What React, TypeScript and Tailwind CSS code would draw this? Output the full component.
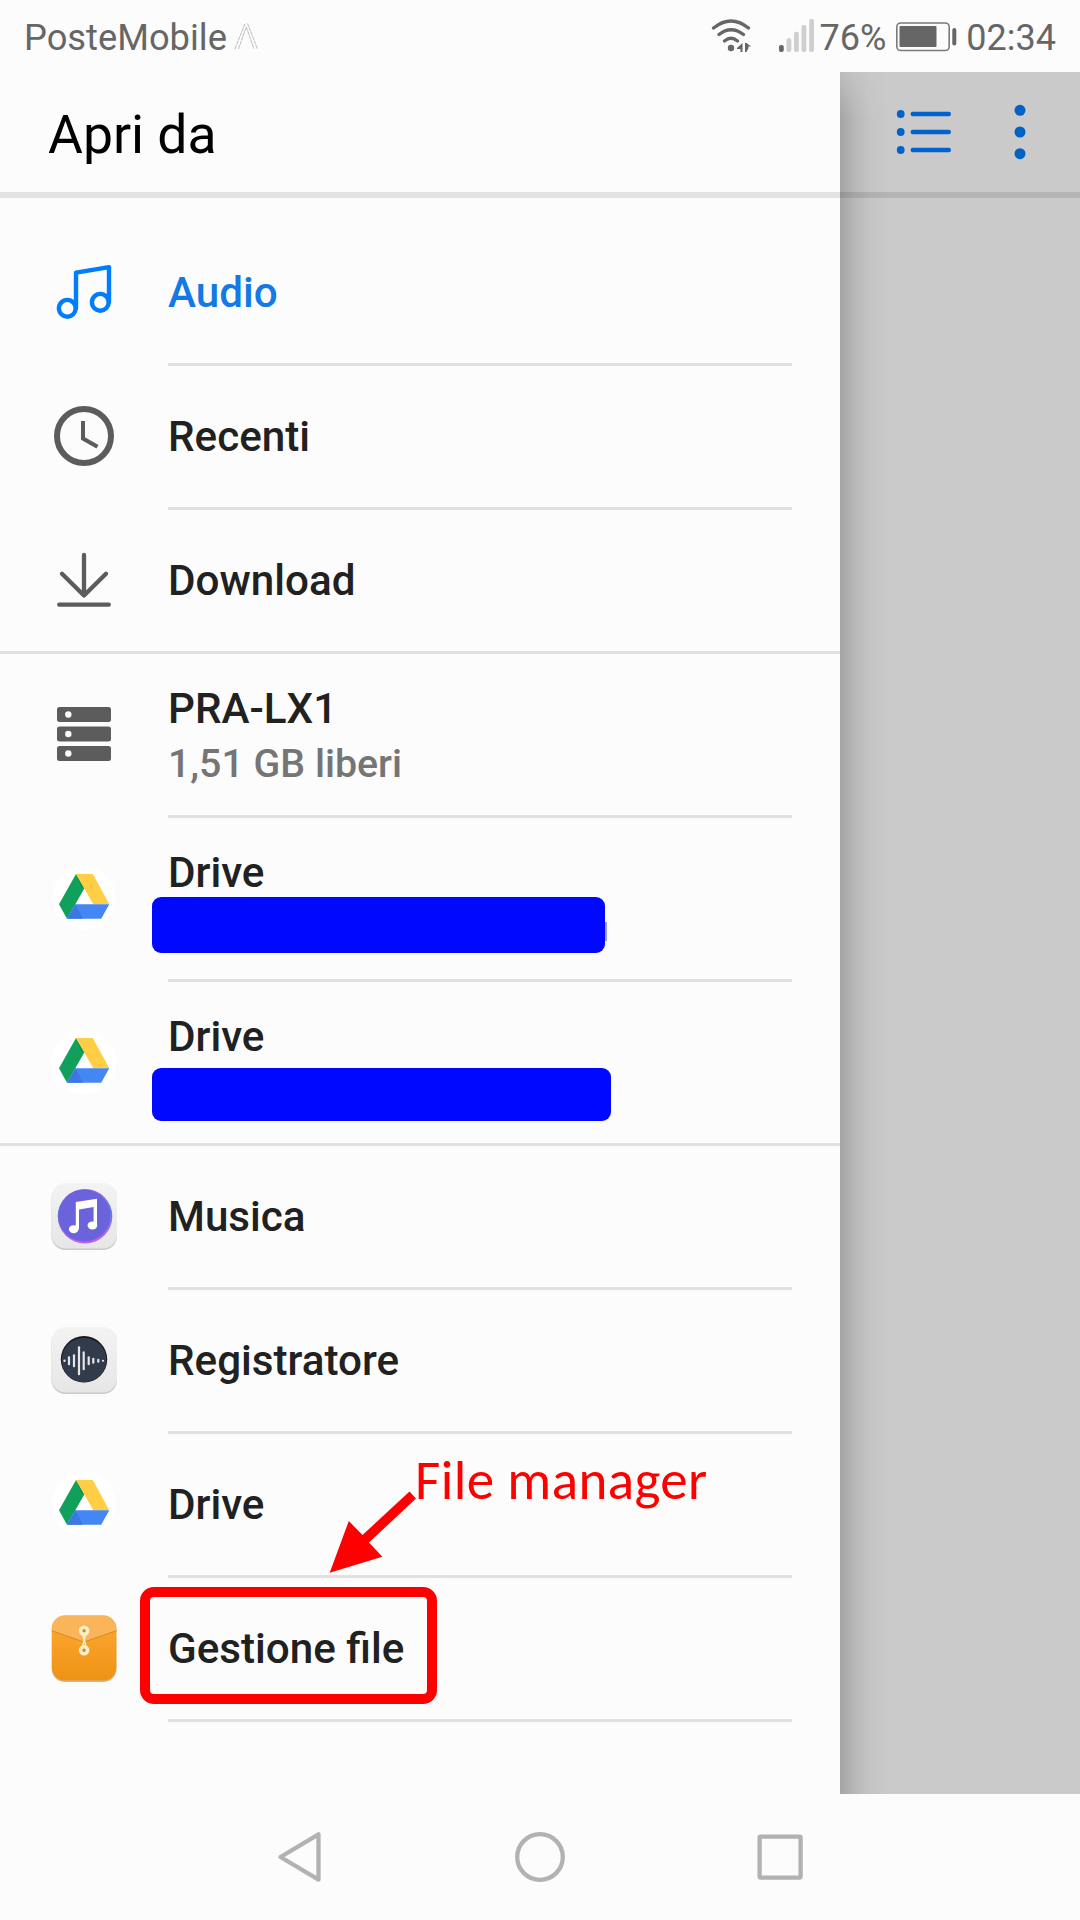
import React from 'react';

function AudioIcon() {
  return (
    <svg viewBox="0 0 72 72" className="w-full h-full" fill="none" stroke="#007dff" strokeWidth="4.4" strokeLinecap="round" strokeLinejoin="round">
      <circle cx="19.3" cy="52.3" r="8.4" />
      <circle cx="52.3" cy="46.3" r="8.4" />
      <path d="M28 52V16.7L61 11.2V46" />
    </svg>
  );
}

function ClockIcon() {
  return (
    <svg viewBox="0 0 72 72" className="w-full h-full" fill="none" stroke="#5c5c5c">
      <circle cx="36" cy="36" r="27" strokeWidth="6" />
      <path d="M35 21V38.5L49.5 46.8" strokeWidth="4" />
    </svg>
  );
}

function DownloadIcon() {
  return (
    <svg viewBox="0 0 72 72" className="w-full h-full" fill="none" stroke="#5c5c5c" strokeWidth="4.3" strokeLinecap="round" strokeLinejoin="round">
      <path d="M36 11V51.5M14 29.7L36 51.5L58 29.7M11.2 60.7H60.8" />
    </svg>
  );
}

function StorageIcon() {
  return (
    <svg viewBox="0 0 72 72" className="w-full h-full">
      <g fill="#5c5c5c">
        <rect x="9" y="9" width="54" height="15" rx="2.5" />
        <rect x="9" y="28.5" width="54" height="15" rx="2.5" />
        <rect x="9" y="48" width="54" height="15" rx="2.5" />
      </g>
      <g fill="#fcfcfc">
        <circle cx="20.3" cy="16.5" r="3.2" />
        <circle cx="20.3" cy="36" r="3.2" />
        <circle cx="20.3" cy="55.5" r="3.2" />
      </g>
    </svg>
  );
}

function DriveIcon() {
  return (
    <svg viewBox="0 0 72 72" className="w-full h-full">
      <circle cx="36" cy="36" r="32" fill="#fff" />
      <path d="M28 12L36.3 26.5L19 56.7L11 42.3Z" fill="#11a05b" />
      <path d="M28 12L36.3 26.5L33.5 25Z" fill="#0d8a4d" />
      <path d="M28 12H44.8L61.3 42.3H45.3Z" fill="#ffce44" />
      <path d="M27.3 42.3H61.3L53.2 56.7H19Z" fill="#4486f4" />
      <path d="M27.3 42.3L35 56.7H19Z" fill="#3d78e2" />
    </svg>
  );
}

function MusicAppIcon() {
  return (
    <svg viewBox="0 0 72 72" className="w-full h-full">
      <defs>
        <linearGradient id="tile" x1="0" y1="0" x2="0" y2="1">
          <stop offset="0" stopColor="#f3f3f3" />
          <stop offset="1" stopColor="#e6e6e6" />
        </linearGradient>
        <linearGradient id="musicRing" x1="0" y1="0" x2="0" y2="1">
          <stop offset="0" stopColor="#b565e0" />
          <stop offset="0.4" stopColor="#5a7fe0" />
          <stop offset="1" stopColor="#c75cf0" />
        </linearGradient>
      </defs>
      <rect x="3.5" y="4" width="65.5" height="66" rx="14" fill="#c9c9c9" />
      <rect x="3.5" y="3" width="65.5" height="65.5" rx="14" fill="url(#tile)" />
      <circle cx="37" cy="36.3" r="27.3" fill="url(#musicRing)" />
      <circle cx="36.3" cy="35.6" r="26" fill="#6a63dc" />
      <g fill="#fff">
        <path d="M27.8 22L49 18.8V45.4H45.6V27L31 29.4V49H27.8Z" />
        <ellipse cx="25.7" cy="49.2" rx="4.8" ry="4" />
        <ellipse cx="44.4" cy="45.4" rx="4.8" ry="4" />
      </g>
    </svg>
  );
}

const waveBars = [
  { x: 16.5, h: 1.2 },
  { x: 21, h: 4.5 },
  { x: 26, h: 6.5 },
  { x: 31, h: 14.5 },
  { x: 35.7, h: 9.5 },
  { x: 40.7, h: 4.5 },
  { x: 45.3, h: 3 },
  { x: 50.3, h: 2 },
  { x: 55, h: 1 },
];

function RecorderIcon() {
  return (
    <svg viewBox="0 0 72 72" className="w-full h-full">
      <rect x="3.5" y="4" width="65.5" height="66" rx="14" fill="#c9c9c9" />
      <rect x="3.5" y="3" width="65.5" height="65.5" rx="14" fill="url(#tile)" />
      <circle cx="36" cy="35.3" r="23.2" fill="#15181f" />
      <circle cx="36" cy="36" r="22.3" fill="#323b4b" />
      {waveBars.map((bar) => (
        <rect key={bar.x} x={bar.x - 1.1} y={36.7 - bar.h} width="2.2" height={bar.h * 2} rx="1" fill="#e4e6ea" />
      ))}
    </svg>
  );
}

function FilesIcon() {
  return (
    <svg viewBox="0 0 72 72" className="w-full h-full">
      <defs>
        <linearGradient id="envelope" x1="0" y1="0" x2="0" y2="1">
          <stop offset="0.3" stopColor="#f9a32a" />
          <stop offset="1" stopColor="#ee9214" />
        </linearGradient>
      </defs>
      <rect x="3.8" y="5" width="64.6" height="65" rx="13" fill="#d5b88c" />
      <rect x="3.8" y="3.6" width="64.6" height="65" rx="13" fill="url(#envelope)" />
      <path d="M3.8 18.5V16.6A13 13 0 0 1 16.8 3.6H55.4A13 13 0 0 1 68.4 16.6V18.5L36 30Z" fill="#fab55a" />
      <path d="M3.8 18.8L36 30L68.4 18.8" fill="none" stroke="#d98a20" strokeWidth="1" />
      <path d="M34.5 22L38 34M38 22L34.5 34" stroke="#fdf0c8" strokeWidth="1.4" />
      <g fill="#c98a30" stroke="#fdeec5" strokeWidth="3.6">
        <circle cx="36.1" cy="18.7" r="3.5" />
        <circle cx="36.1" cy="38.3" r="3.5" />
      </g>
    </svg>
  );
}

interface RowProps {
  icon: React.ReactNode;
  label: string;
  detail?: string;
  tall?: boolean;
  active?: boolean;
  last?: boolean;
}

function Row({ icon, label, detail, tall, active, last }: RowProps) {
  return (
    <li>
      <div className={tall ? 'flex items-center h-[161px] pl-12' : 'flex items-center h-[141px] pl-12'}>
        <div className="w-[72px] h-[72px] -mt-px mr-12 shrink-0">{icon}</div>
        <div className={tall ? 'h-full pt-[30px]' : ''}>
          <p className={active ? 'text-[42.2px] leading-[49px] font-medium text-[#1279e6]' : 'text-[42.2px] leading-[49px] font-medium text-[#212121]'}>
            {label}
          </p>
          {detail && <p className="mt-2 text-[39.3px] leading-[46px] font-medium text-[#757575]">{detail}</p>}
        </div>
      </div>
      <div className={last ? 'h-[3px] bg-[#e1e1e1]' : 'h-[3px] ml-[168px] mr-12 bg-[#e1e1e1]'}></div>
    </li>
  );
}

function StatusBar() {
  return (
    <header className="flex items-center h-[72px] pl-6 pr-6 text-[36px] leading-[42px] text-[#666666]">
      <span className="pt-1 text-[36.3px]">PosteMobile</span>
      <svg width="30" height="30" viewBox="0 0 30 30" className="ml-1.5 mt-0.5 shrink-0" fill="none" stroke="#b4b4b4" strokeWidth="0.9" strokeDasharray="4 0.6">
        <path d="M2 27L12 1.5M14.5 1.5L24.5 27M5.5 27L13.3 5L21 27" />
      </svg>
      <div className="flex items-center ml-auto">
        <svg width="44" height="40" viewBox="710 16 44 40" className="mr-6" fill="none" stroke="#666666" strokeWidth="3.2" strokeLinecap="round">
          <path d="M713.5 28Q731 14 748.5 28M719 34.5Q731 25 743.5 34.5M724.5 41Q731 35.5 737.5 41" />
          <circle cx="731" cy="48" r="3.2" fill="#666666" stroke="none" />
          <path d="M737 48L742.5 43V52H740.5V49H737ZM745 43H746.5L751 46.5H748.5V48L746.5 52H745Z" fill="#666666" stroke="none" />
        </svg>
        <svg width="38" height="40" viewBox="778 16 38 40" className="mr-1">
          <rect x="779" y="45" width="4.8" height="7" rx="2" fill="#666666" />
          <g fill="#cfcfcf">
            <rect x="786.5" y="38.3" width="4.8" height="13.7" rx="2" />
            <rect x="794" y="31.7" width="4.8" height="20.3" rx="2" />
            <rect x="801.5" y="25" width="4.8" height="27" rx="2" />
            <rect x="809.2" y="19" width="4.8" height="33" rx="2" />
          </g>
        </svg>
        <span className="pt-1">76%</span>
        <svg width="62" height="40" viewBox="895 17 62 40" className="ml-[9px] mr-[9px] mt-0.5">
          <rect x="896.8" y="23" width="52.4" height="27.5" rx="4" fill="none" stroke="#7a7a7a" strokeWidth="1.6" />
          <rect x="899.5" y="26" width="37" height="21" rx="1" fill="#666666" />
          <rect x="952.3" y="28" width="4" height="17.5" rx="2" fill="#666666" />
        </svg>
        <span className="pt-1">02:34</span>
      </div>
    </header>
  );
}

function NavBar() {
  return (
    <nav className="flex items-center justify-center h-[126px] gap-[180px]">
      <svg width="60" height="60" viewBox="0 0 60 60" fill="none" stroke="#b2b2b2" strokeWidth="4.3" strokeLinejoin="round">
        <path d="M10.5 30L48.5 7.3V52.7Z" />
      </svg>
      <svg width="60" height="60" viewBox="0 0 60 60" fill="none" stroke="#b2b2b2" strokeWidth="4.3">
        <circle cx="30" cy="30" r="22.8" />
      </svg>
      <svg width="60" height="60" viewBox="0 0 60 60" fill="none" stroke="#b2b2b2" strokeWidth="4.3" strokeLinejoin="round">
        <rect x="9.6" y="9.6" width="41" height="41" rx="1" />
      </svg>
    </nav>
  );
}

export default function App() {
  return (
    <div className="relative flex flex-col w-[1080px] h-[1920px] overflow-hidden bg-[#fcfcfc] font-['Roboto',sans-serif]">
      <StatusBar />
      <main className="flex h-[1722px]">
        <aside className="w-[840px] shrink-0">
          <h1 className="h-[120px] pl-12 text-[53.5px] leading-[126px] text-black">Apri da</h1>
          <div className="h-1.5 bg-[#e2e2e2]"></div>
          <ul className="pt-6">
            <Row icon={<AudioIcon />} label="Audio" active />
            <Row icon={<ClockIcon />} label="Recenti" />
            <Row icon={<DownloadIcon />} label="Download" last />
            <Row icon={<StorageIcon />} label="PRA-LX1" detail="1,51 GB liberi" tall />
            <Row icon={<DriveIcon />} label="Drive" tall />
            <Row icon={<DriveIcon />} label="Drive" tall last />
            <Row icon={<MusicAppIcon />} label="Musica" />
            <Row icon={<RecorderIcon />} label="Registratore" />
            <Row icon={<DriveIcon />} label="Drive" />
            <Row icon={<FilesIcon />} label="Gestione file" />
          </ul>
        </aside>
        <section className="relative flex-1 bg-[#cacaca]">
          <div className="flex items-center justify-end h-[120px] pr-9">
            <svg width="68" height="60" viewBox="0 0 68 60" className="mr-10" fill="#0062cc">
              <circle cx="12.7" cy="12" r="3.9" />
              <circle cx="12.7" cy="30" r="3.9" />
              <circle cx="12.7" cy="48" r="3.9" />
              <path d="M24.8 12H60.8M24.8 30H60.8M24.8 48H60.8" stroke="#0062cc" strokeWidth="4.4" strokeLinecap="round" />
            </svg>
            <svg width="48" height="60" viewBox="0 0 48 60" fill="#0062c4">
              <circle cx="24" cy="8.3" r="5.5" />
              <circle cx="24" cy="30" r="5.5" />
              <circle cx="24" cy="51.7" r="5.5" />
            </svg>
          </div>
          <div className="h-1.5 bg-[#b5b5b5]"></div>
          <div className="absolute inset-y-0 left-0 w-12 bg-[linear-gradient(to_right,rgba(0,0,0,0.19),rgba(0,0,0,0.09)_30%,rgba(0,0,0,0.03)_60%,transparent)] [mask-image:linear-gradient(to_bottom,rgba(0,0,0,0.35),black_48px)]"></div>
        </section>
      </main>
      <NavBar />

      {/* annotations */}
      <div className="absolute left-[605px] top-[922px] w-[2px] h-[19px] bg-[#9a9af0]"></div>
      <div className="absolute left-[152px] top-[897px] w-[453px] h-[56px] rounded-[9px] bg-[#0008ff]"></div>
      <div className="absolute left-[152px] top-[1068px] w-[459px] h-[53px] rounded-[9px] bg-[#0008ff]"></div>
      <div className="absolute left-[140px] top-[1587px] w-[297px] h-[117px] rounded-[14px] border-[10px] border-[#ff0000]"></div>
      <svg className="absolute left-[320px] top-[1480px]" width="110" height="100" viewBox="320 1480 110 100" fill="#ff0000">
        <path d="M329.7 1572.7L348.8 1521L362.5 1535L409.5 1491.5L416 1498.5L369 1542.5L382.3 1556.7Z" />
      </svg>
      <p className="absolute left-[415px] top-[1448px] text-[55px] leading-[66px] tracking-[0.4px] text-[#ff0000] whitespace-nowrap font-['Carlito','Open_Sans',sans-serif]">File manager</p>
    </div>
  );
}
